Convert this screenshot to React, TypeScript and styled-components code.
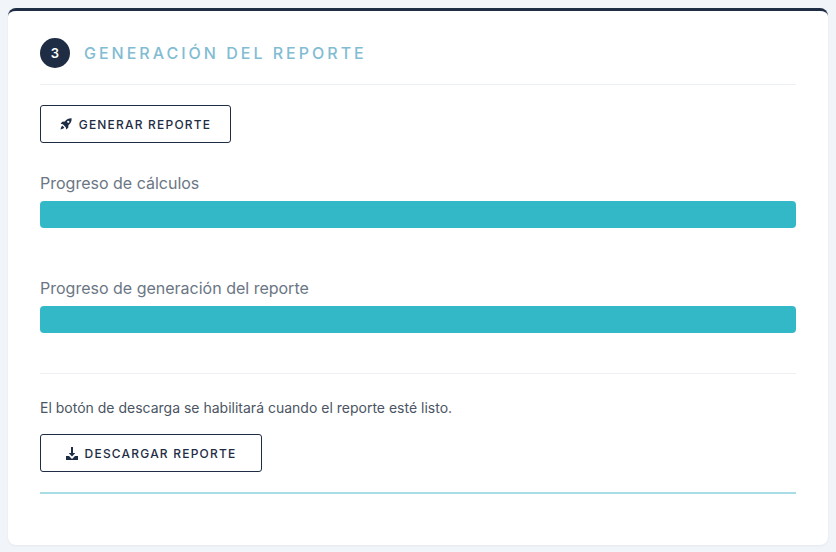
import React from "react";
import styled, { createGlobalStyle } from "styled-components";

const Global = createGlobalStyle`
  html, body { margin: 0; background: #f1f5f9; }
  body { padding: 8px; font-family: "Inter", "Liberation Sans", sans-serif; }
  * { box-sizing: border-box; }
`;

const Card = styled.div`
  width: 820px; height: 537px; background: #fff; border-radius: 8px;
  border-top: 3px solid #1e2d44; padding: 27px 32px 0;
  box-shadow: 0 1px 3px rgba(0,0,0,0.05);
`;
const Header = styled.div`
  display: flex; align-items: center; gap: 14px; padding-bottom: 16px;
  border-bottom: 1px solid #eceff3;
`;
const Step = styled.div`
  width: 30px; height: 30px; border-radius: 50%; background: #1e2d44; color: #fff;
  display: flex; align-items: center; justify-content: center; font-size: 13px; font-weight: 600;
`;
const Title = styled.h2`
  margin: 0; font-size: 16px; font-weight: 500; letter-spacing: 3px; color: #82bcd3;
`;
const Button = styled.button<{ $w: number }>`
  display: flex; align-items: center; justify-content: center; gap: 7px;
  width: ${p => p.$w}px; height: 38px; background: #fff; border: 1px solid #1e2d44;
  border-radius: 3px; color: #1e2d44; font-family: inherit; font-size: 12px;
  letter-spacing: 1.2px; font-weight: 500; cursor: pointer; padding: 0;
`;
const Label = styled.div<{ $top: number }>`
  margin-top: ${p => p.$top}px; font-size: 16px; color: #6b7684; margin-bottom: 8px;
`;
const Bar = styled.div`
  height: 27px; border-radius: 4px; background: #32b8c6;
`;
const Divider = styled.div`
  height: 1px; background: #eceff3; margin-top: 40px;
`;
const Note = styled.p`
  margin: 25px 0 18px; font-size: 14px; color: #4b5563;
`;
const Accent = styled.div`
  height: 2px; background: #a9dde6; margin-top: 20px;
`;
const Space = styled.div<{ $h: number }>` height: ${p => p.$h}px; `;

const Rocket = () => (
  <svg width="12" height="12" viewBox="0 0 16 16" fill="#1e2d44">
    <path d="M15.5.5C12 .3 8.8 1.8 6.5 4.8L3 5 .8 7.7l3 .6 3.9 3.9.6 3 2.7-2.2.2-3.5c3-2.3 4.5-5.5 4.3-9zM11 6.5a1.5 1.5 0 1 1 0-3 1.5 1.5 0 0 1 0 3z" />
    <path d="M3.2 10.3C1.8 11 1 13 .8 15.2c2.2-.2 4.2-1 4.9-2.4z" />
  </svg>
);
const Download = () => (
  <svg width="12" height="13" viewBox="0 0 12 13" fill="#1e2d44">
    <path d="M5 0h2v6h2.3L6 9.5 2.7 6H5z" />
    <path d="M0 9h3l3 3 3-3h3v4H0z" />
  </svg>
);

export default function App() {
  return (
    <>
      <Global />
      <Card>
        <Header><Step>3</Step><Title>GENERACIÓN DEL REPORTE</Title></Header>
        <Space $h={20} />
        <Button $w={191}><Rocket />GENERAR REPORTE</Button>
        <Label $top={30}>Progreso de cálculos</Label>
        <Bar />
        <Label $top={50}>Progreso de generación del reporte</Label>
        <Bar />
        <Divider />
        <Note>El botón de descarga se habilitará cuando el reporte esté listo.</Note>
        <Button $w={222}><Download />DESCARGAR REPORTE</Button>
        <Accent />
      </Card>
    </>
  );
}
